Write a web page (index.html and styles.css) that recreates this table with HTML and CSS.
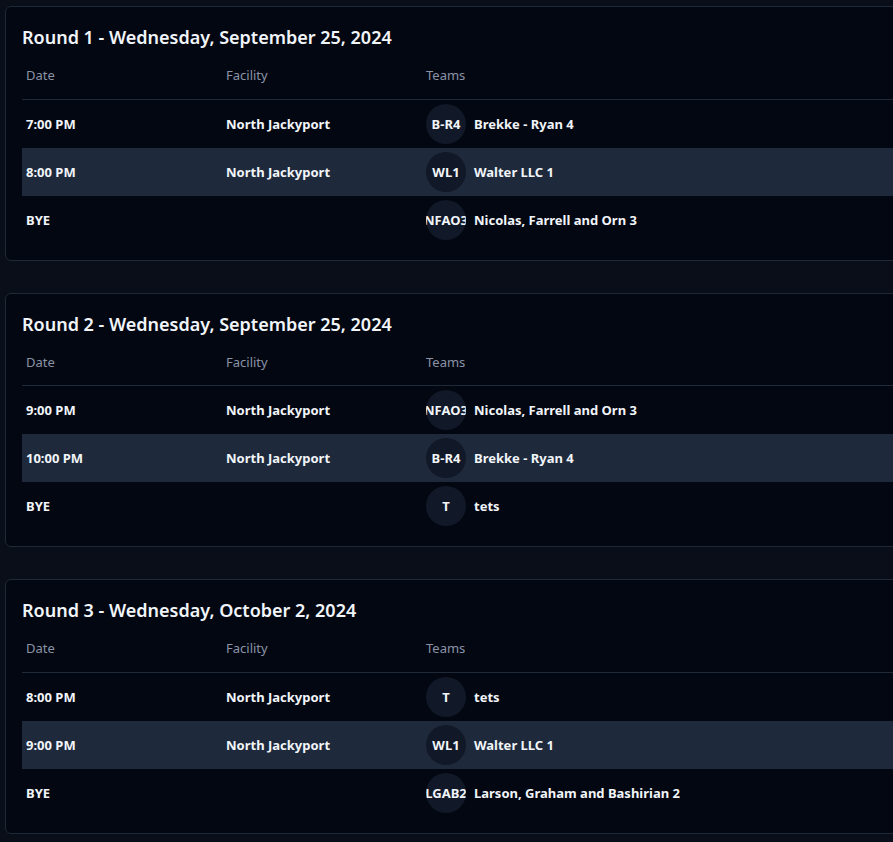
FILE: index.html
```html
<!DOCTYPE html>
<html>
<head>
<meta charset="utf-8">
<link rel="stylesheet" href="styles.css">
</head>
<body>
<div class="rounds">
  <section class="card">
    <h2 class="title">Round 1 - Wednesday, September 25, 2024</h2>
    <table class="sched">
      <thead><tr><th>Date</th><th>Facility</th><th>Teams</th></tr></thead>
      <tbody>
        <tr><td>7:00 PM</td><td>North Jackyport</td><td><div class="team"><span class="av">B-R4</span><span>Brekke - Ryan 4</span></div></td></tr>
        <tr class="alt"><td>8:00 PM</td><td>North Jackyport</td><td><div class="team"><span class="av">WL1</span><span>Walter LLC 1</span></div></td></tr>
        <tr><td>BYE</td><td></td><td><div class="team"><span class="av">NFAO3</span><span>Nicolas, Farrell and Orn 3</span></div></td></tr>
      </tbody>
    </table>
  </section>
  <section class="card">
    <h2 class="title">Round 2 - Wednesday, September 25, 2024</h2>
    <table class="sched">
      <thead><tr><th>Date</th><th>Facility</th><th>Teams</th></tr></thead>
      <tbody>
        <tr><td>9:00 PM</td><td>North Jackyport</td><td><div class="team"><span class="av">NFAO3</span><span>Nicolas, Farrell and Orn 3</span></div></td></tr>
        <tr class="alt"><td>10:00 PM</td><td>North Jackyport</td><td><div class="team"><span class="av">B-R4</span><span>Brekke - Ryan 4</span></div></td></tr>
        <tr><td>BYE</td><td></td><td><div class="team"><span class="av">T</span><span>tets</span></div></td></tr>
      </tbody>
    </table>
  </section>
  <section class="card">
    <h2 class="title">Round 3 - Wednesday, October 2, 2024</h2>
    <table class="sched">
      <thead><tr><th>Date</th><th>Facility</th><th>Teams</th></tr></thead>
      <tbody>
        <tr><td>8:00 PM</td><td>North Jackyport</td><td><div class="team"><span class="av">T</span><span>tets</span></div></td></tr>
        <tr class="alt"><td>9:00 PM</td><td>North Jackyport</td><td><div class="team"><span class="av">WL1</span><span>Walter LLC 1</span></div></td></tr>
        <tr><td>BYE</td><td></td><td><div class="team"><span class="av">LGAB2</span><span>Larson, Graham and Bashirian 2</span></div></td></tr>
      </tbody>
    </table>
  </section>
</div>
</body>
</html>
```
FILE: styles.css
```css
html, body {
  margin: 0;
  padding: 0;
  overflow: hidden;
  background: #0a0e18;
}
body {
  font-family: "Noto Sans", "Open Sans", sans-serif;
  color: #f1f5f9;
  width: 893px;
  height: 842px;
}
.rounds {
  display: flex;
  flex-direction: column;
  gap: 32px;
  padding: 6px 0 0 5px;
  width: 1100px;
}
.card {
  background: #030712;
  border: 1px solid #1f2937;
  border-radius: 6px;
  padding: 16px;
}
.title {
  margin: 0;
  font-size: 18px;
  line-height: 28px;
  font-weight: 600;
  color: #f1f5f9;
}
.sched {
  border-collapse: collapse;
  width: 100%;
  font-size: 13px;
}
.sched th {
  text-align: left;
  font-weight: 400;
  color: #8a93a6;
  padding: 14px 4px 13.5px;
  line-height: 20px;
  width: 192px;
  border-bottom: 1px solid #1f2937;
}
.sched th:last-child { width: auto; }
.sched td {
  padding: 4px;
  height: 40px;
  font-weight: 700;
  line-height: 20px;
  color: #f1f5f9;
}
.sched tr.alt td { background: #1e293b; }
.team {
  display: flex;
  align-items: center;
  gap: 8px;
}
.av {
  width: 40px;
  height: 40px;
  border-radius: 50%;
  background: #111827;
  display: flex;
  align-items: center;
  justify-content: center;
  overflow: hidden;
  white-space: nowrap;
  flex: none;
}
```
